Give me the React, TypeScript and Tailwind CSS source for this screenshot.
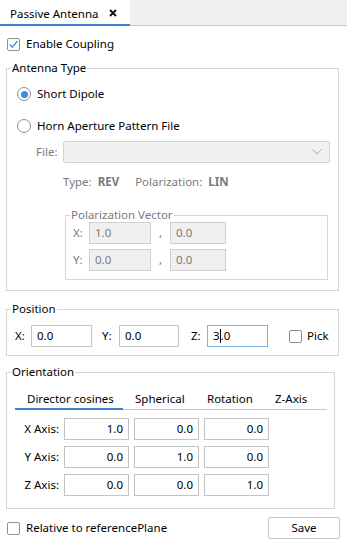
import React from "react";

const font = "font-['Noto_Sans','Open_Sans',sans-serif]";

function CheckBox({ checked }: { checked?: boolean }) {
  return (
    <span className="relative flex h-[13px] w-[13px] shrink-0 items-center justify-center rounded-[2px] border border-[#8f8f8f] bg-white">
      {checked && (
        <svg width="11" height="11" viewBox="0 0 11 11" className="absolute">
          <path d="M1.8 5.6 L4.3 8.2 L9.3 2.3" fill="none" stroke="#4a90d9" strokeWidth="1.4" />
        </svg>
      )}
    </span>
  );
}

function Radio({ checked }: { checked?: boolean }) {
  return (
    <span className="flex h-[14px] w-[14px] shrink-0 items-center justify-center rounded-full border border-[#8f8f8f] bg-white">
      {checked && <span className="h-[7px] w-[7px] rounded-full bg-[#3c8ce0]" />}
    </span>
  );
}

function Field({ value, w, disabled, right }: { value: string; w: string; disabled?: boolean; right?: boolean }) {
  return (
    <div
      className={`flex h-[22px] ${w} shrink-0 items-center border px-[5px] ${
        disabled ? "border-[#cfcfcf] bg-[#f0f0f0] text-[#7a7a7a]" : "border-[#c3c3c3] bg-white text-black"
      } ${right ? "justify-end" : ""}`}
    >
      {value}
    </div>
  );
}

export default function App() {
  return (
    <div className={`${font} h-[556px] w-[347px] bg-white text-[11.5px] leading-[16px] text-black`}>
      {/* Tab strip */}
      <div className="flex h-[26px]">
        <div className="flex h-full w-[130px] items-center border-b-2 border-[#3f81c6] bg-white pl-[10px] pt-[3px]">
          <span>Passive Antenna</span>
          <svg width="8" height="8" viewBox="0 0 8 8" className="ml-[11px] mb-[2px]">
            <path d="M1 1 L7 7 M7 1 L1 7" stroke="#111" strokeWidth="1.8" />
          </svg>
        </div>
        <div className="h-full flex-1 border-b border-[#c6c6c6] bg-[#f0f0f0]" />
      </div>

      {/* Enable coupling */}
      <div className="mt-[10px] flex h-[16px] items-center gap-[6px] pl-[7px]">
        <CheckBox checked />
        <span>Enable Coupling</span>
      </div>

      {/* Antenna Type */}
      <fieldset className="ml-[6px] mt-[8px] w-[333px] border border-[#d6d6d6] pb-[10px]">
        <legend className="ml-[4px] px-[1px]">Antenna Type</legend>
        <div className="mt-[10px] flex h-[16px] items-center gap-[6px] pl-[10px]">
          <Radio checked />
          <span>Short Dipole</span>
        </div>
        <div className="mt-[16px] flex h-[16px] items-center gap-[6px] pl-[10px]">
          <Radio />
          <span>Horn Aperture Pattern File</span>
        </div>
        <div className="mt-[7px] flex items-center pl-[29px] text-[#7a7a7a]">
          <span className="w-[27px]">File:</span>
          <div className="flex h-[22px] w-[267px] items-center justify-end rounded-[2px] border border-[#d4d4d4] bg-[#f0f0f0] pr-[7px]">
            <svg width="10" height="6" viewBox="0 0 10 6">
              <path d="M0.5 0.5 L5 5 L9.5 0.5" fill="none" stroke="#a8a8a8" strokeWidth="1" />
            </svg>
          </div>
        </div>
        <div className="mt-[11px] flex h-[16px] items-center pl-[56px] text-[#7a7a7a]">
          <span>Type:</span>
          <span className="ml-[6px] font-bold">REV</span>
          <span className="ml-[16px]">Polarization:</span>
          <span className="ml-[6px] font-bold">LIN</span>
        </div>
        <fieldset className="ml-[58px] mt-[18px] w-[263px] border border-[#d6d6d6] pb-[8px] text-[#7a7a7a]">
          <legend className="ml-[4px] px-[1px] leading-[14px]">Polarization Vector</legend>
          <div className="flex flex-col gap-[5px]">
            <div className="flex items-center pl-[7px]">
              <span className="w-[16px]">X:</span>
              <Field value="1.0" w="w-[62px]" disabled />
              <span className="w-[19px] text-center">,</span>
              <Field value="0.0" w="w-[56px]" disabled />
            </div>
            <div className="flex items-center pl-[7px]">
              <span className="w-[16px]">Y:</span>
              <Field value="0.0" w="w-[62px]" disabled />
              <span className="w-[19px] text-center">,</span>
              <Field value="0.0" w="w-[56px]" disabled />
            </div>
          </div>
        </fieldset>
      </fieldset>

      {/* Position */}
      <fieldset className="ml-[6px] mt-[10px] w-[333px] border border-[#d6d6d6] pb-[8px]">
        <legend className="ml-[4px] px-[1px]">Position</legend>
        <div className="mt-[8px] flex items-center pl-[8px]">
          <span className="w-[16px]">X:</span>
          <Field value="0.0" w="w-[61px]" />
          <span className="ml-[10px] w-[17px]">Y:</span>
          <Field value="0.0" w="w-[60px]" />
          <span className="ml-[12px] w-[16px]">Z:</span>
          <div className="flex h-[22px] w-[61px] items-center border border-[#7eb4ea] bg-white px-[5px]">
            <span>3</span>
            <span className="h-[14px] w-px bg-black" />
            <span>.0</span>
          </div>
          <span className="ml-[21px] flex items-center gap-[5px]">
            <CheckBox />
            <span>Pick</span>
          </span>
        </div>
      </fieldset>

      {/* Orientation */}
      <fieldset className="ml-[6px] mt-[8px] w-[329px] border border-[#d6d6d6] pb-[12px]">
        <legend className="ml-[4px] px-[1px]">Orientation</legend>
        <div className="ml-[8px] mt-[11px] flex w-[312px] border-b border-[#c8c8c8]">
          <div className="-mb-px w-[108px] border-b-2 border-[#3f81c6] pb-px pl-[12px]">Director cosines</div>
          <div className="w-[72px] pl-[12px]">Spherical</div>
          <div className="w-[68px] pl-[12px]">Rotation</div>
          <div className="w-[63px] pl-[12px]">Z-Axis</div>
        </div>
        <div className="ml-[8px] mt-[8px] flex flex-col gap-[6px]">
          {[
            ["X Axis:", "1.0", "0.0", "0.0"],
            ["Y Axis:", "0.0", "1.0", "0.0"],
            ["Z Axis:", "0.0", "0.0", "1.0"],
          ].map((r) => (
            <div key={r[0]} className="flex items-center gap-[5px]">
              <span className="w-[44px] text-right">{r[0]}</span>
              <Field value={r[1]} w="w-[65px]" right />
              <Field value={r[2]} w="w-[65px]" right />
              <Field value={r[3]} w="w-[65px]" right />
            </div>
          ))}
        </div>
      </fieldset>

      {/* Bottom */}
      <div className="mt-[8px] flex items-center justify-between pl-[7px] pr-[7px]">
        <div className="flex items-center gap-[6px]">
          <CheckBox />
          <span>Relative to referencePlane</span>
        </div>
        <button className="flex h-[22px] w-[72px] items-center justify-center rounded-[2px] border border-[#c6c6c6] bg-white">
          Save
        </button>
      </div>
    </div>
  );
}
